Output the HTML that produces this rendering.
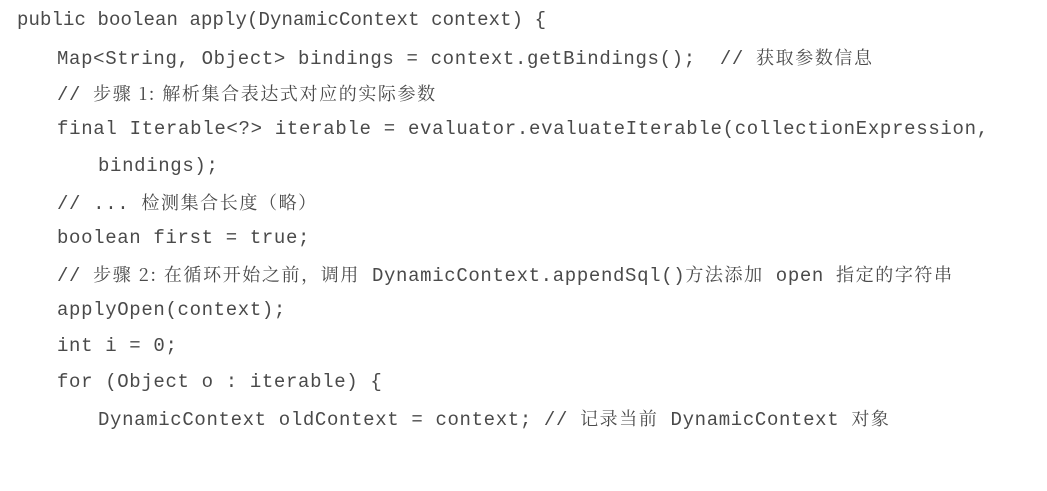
<!DOCTYPE html>
<html><head><meta charset="utf-8"><style>
html,body{margin:0;padding:0;background:#fff;width:1047px;height:491px;overflow:hidden}
.l{position:absolute;white-space:pre;font-family:"Liberation Mono","Noto Serif CJK SC",monospace;font-size:19px;letter-spacing:0.65px;color:#4a4a4a;line-height:24px}
.c{font-family:"Noto Serif CJK SC","Liberation Serif",serif;letter-spacing:1.6px;font-size:18px}
</style></head><body>
<div class="l" style="left:17px;top:8px;letter-spacing:0.1px">public boolean apply(DynamicContext context) {</div>
<div class="l" style="left:57px;top:45px">Map&lt;String, Object&gt; bindings = context.getBindings();  // <span class="c">获取参数信息</span></div>
<div class="l" style="left:57px;top:81px">// <span class="c">步骤 1: 解析集合表达式对应的实际参数</span></div>
<div class="l" style="left:57px;top:117px;letter-spacing:0.7px">final Iterable&lt;?&gt; iterable = evaluator.evaluateIterable(collectionExpression,</div>
<div class="l" style="left:98px;top:154px">bindings);</div>
<div class="l" style="left:57px;top:190px">// ... <span class="c">检测集合长度（略）</span></div>
<div class="l" style="left:57px;top:226px">boolean first = true;</div>
<div class="l" style="left:57px;top:262px">// <span class="c">步骤 2: 在循环开始之前，调用</span> DynamicContext.appendSql()<span class="c">方法添加</span> open <span class="c">指定的字符串</span></div>
<div class="l" style="left:57px;top:298px">applyOpen(context);</div>
<div class="l" style="left:57px;top:334px">int i = 0;</div>
<div class="l" style="left:57px;top:370px">for (Object o : iterable) {</div>
<div class="l" style="left:98px;top:406px">DynamicContext oldContext = context; // <span class="c">记录当前</span> DynamicContext <span class="c">对象</span></div>
</body></html>
